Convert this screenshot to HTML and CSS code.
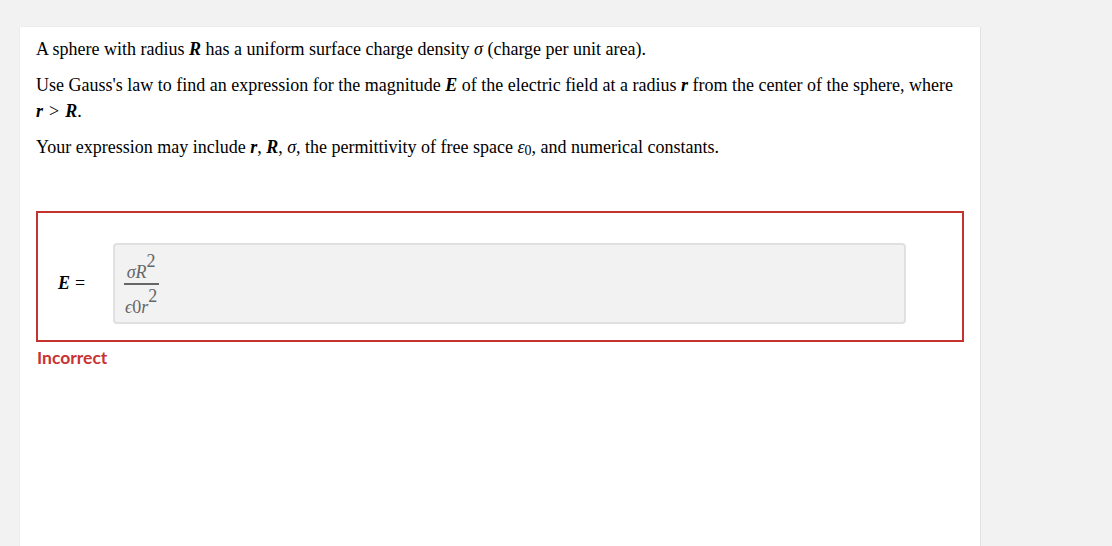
FILE: index.html
```html
<!DOCTYPE html>
<html>
<head>
<meta charset="utf-8">
<link rel="stylesheet" href="styles.css">
</head>
<body>
<div class="card">
  <p class="para">A sphere with radius <i class="v">R</i> has a uniform surface charge density <i class="s">σ</i> (charge per unit area).</p>
  <p class="para">Use Gauss's law to find an expression for the magnitude <i class="v">E</i> of the electric field at a radius <i class="v">r</i> from the center of the sphere, where <i class="v">r</i><span class="op">&gt;</span><i class="v">R</i>.</p>
  <p class="para">Your expression may include <i class="v">r</i>, <i class="v">R</i>, <i class="s">σ</i>, the permittivity of free space <i class="eps">ε</i><span class="sub0">0</span>, and numerical constants.</p>

  <div class="answer">
    <div class="label"><i class="v">E</i><span class="op">=</span></div>
    <div class="input">
      <div class="frac">
        <div class="num"><i>σR</i><span class="sup">2</span></div>
        <div class="den"><i>ϵ</i>0<i>r</i><span class="sup">2</span></div>
      </div>
    </div>
  </div>
  <div class="status">Incorrect</div>
</div>
</body>
</html>
```

FILE: styles.css
```css
html, body {
  margin: 0;
  padding: 0;
  background: #f2f2f2;
  height: 100%;
  overflow: hidden;
}
body {
  padding: 27px 0 0 20px;
  box-sizing: border-box;
}
.card {
  width: 960px;
  height: 519px;
  background: #ffffff;
  box-shadow: 1px 0 0 #e2e2e2, -1px 0 0 #ececec, 0 -1px 0 #ececec;
  box-sizing: border-box;
  padding: 9px 16px 0 16px;
  font-family: "Liberation Serif", "Times New Roman", serif;
  font-size: 18px;
  color: #000;
}
.para {
  margin: 0 0 10px 0;
  line-height: 26px;
}
.v {
  font-style: italic;
  font-weight: bold;
}
.s {
  font-style: italic;
}
.eps {
  font-style: italic;
}
.op {
  margin: 0 6px;
}
.sub0 {
  font-size: 14px;
  position: relative;
  top: 2px;
}
.answer {
  margin-top: 49px;
  border: 2px solid #c33430;
  height: 131px;
  box-sizing: border-box;
  display: flex;
  align-items: flex-start;
  padding: 30px 56px 0 20px;
}
.label {
  width: 55px;
  flex: none;
  font-size: 18px;
  line-height: 20px;
  margin-top: 30px;
}
.label .op {
  margin: 0 0 0 5px;
}
.input {
  flex: 1;
  height: 81px;
  box-sizing: border-box;
  background: #f2f2f2;
  border: 2px solid #e0e0e0;
  border-radius: 4px;
  padding: 16px 0 0 7px;
}
.frac {
  display: inline-flex;
  flex-direction: column;
  align-items: center;
  color: #666;
  font-size: 18px;
}
.num {
  line-height: 22px;
  padding: 0 3px 0 3px;
  border-bottom: 2px solid #666;
}
.den {
  line-height: 22px;
  padding: 11px 3px 0 3px;
}
.sup {
  font-size: 18px;
  position: relative;
  top: -11px;
}
.status {
  margin-top: 6px;
  font-family: "Lato", "Open Sans", sans-serif;
  font-weight: bold;
  font-size: 17.5px;
  color: #c83232;
  line-height: 20px;
  padding-left: 1px;
}
```
